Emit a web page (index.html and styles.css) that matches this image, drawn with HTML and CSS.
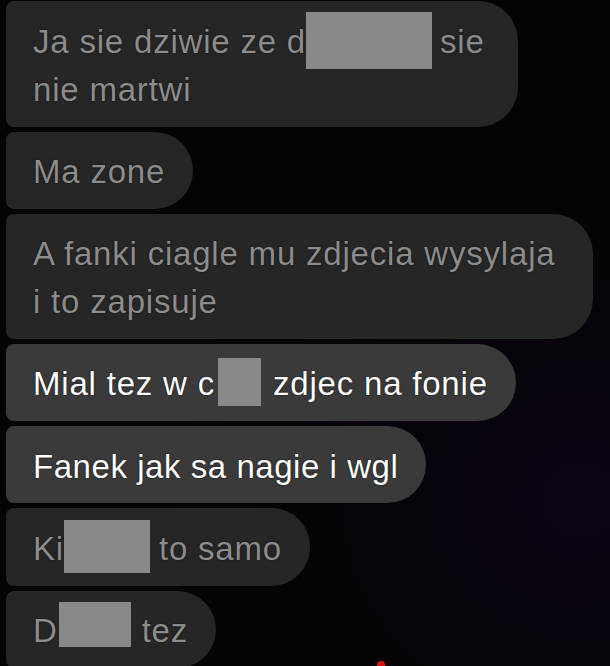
FILE: index.html
```html
<!DOCTYPE html>
<html lang="pl">
<head>
<meta charset="utf-8">
<title>Chat</title>
<link rel="stylesheet" href="styles.css">
</head>
<body>
<main class="chat">
  <div class="bubble bubble-wide1">Ja sie dziwie ze d<span class="redact r1"></span>sie<br>nie martwi</div>
  <div class="bubble">Ma zone</div>
  <div class="bubble bubble-wide3">A fanki ciagle mu zdjecia wysylaja<br>i to zapisuje</div>
  <div class="bubble bubble-light">Mial tez w c<span class="redact r4"></span>zdjec na fonie</div>
  <div class="bubble bubble-light bubble-tight">Fanek jak sa nagie i wgl</div>
  <div class="bubble">Ki<span class="redact r6"></span>to samo</div>
  <div class="bubble">D<span class="redact r7"></span>tez</div>
  <span class="rec-dot"></span>
</main>
</body>
</html>
```

FILE: styles.css
```css
html, body {
  margin: 0;
  padding: 0;
}

body {
  width: 610px;
  height: 666px;
  overflow: hidden;
  background: radial-gradient(ellipse 70% 60% at 95% 75%, #0c0412 0%, #070309 55%, #050405 100%);
  font-family: "Liberation Sans", Arial, sans-serif;
}

.chat {
  position: relative;
  display: flex;
  flex-direction: column;
  align-items: flex-start;
  gap: 5px;
  padding: 1px 0 0 6px;
  height: 666px;
  box-sizing: border-box;
}

.bubble {
  box-sizing: border-box;
  background: #262626;
  color: #8c8c8c;
  font-size: 33px;
  letter-spacing: 0.8px;
  line-height: 48px;
  padding: 16.5px 28px 12.5px 27px;
  border-radius: 8px 38.5px 38.5px 8px;
  white-space: nowrap;
  text-shadow: 0 0 1.5px rgba(0, 0, 0, 0.9);
}

.bubble-wide1 {
  padding-right: 33px;
  border-radius: 8px 40px 40px 8px;
}

.bubble-wide3 {
  padding-right: 38px;
  border-radius: 8px 40px 40px 8px;
}

.bubble-light {
  background: #3a3a3a;
  color: #ffffff;
}

.bubble-tight {
  letter-spacing: 0.55px;
}

.redact {
  display: inline-block;
  background: #898989;
  vertical-align: middle;
  text-shadow: none;
  position: relative;
}

.r1 {
  width: 126px;
  height: 57px;
  margin: -6px 8px -6px 0;
  top: -3px;
}

.r4 {
  width: 43px;
  height: 48px;
  margin: -2px 12px -2px 3px;
  top: -5px;
}

.r6 {
  width: 86px;
  height: 53px;
  margin: -4px 9px -4px 0;
  top: -4px;
}

.r7 {
  width: 72px;
  height: 45px;
  margin: -2px 11px -2px 1px;
  top: -9px;
}

.rec-dot {
  position: absolute;
  left: 377px;
  top: 661px;
  width: 8px;
  height: 8px;
  border-radius: 50%;
  background: #e01010;
}
```
